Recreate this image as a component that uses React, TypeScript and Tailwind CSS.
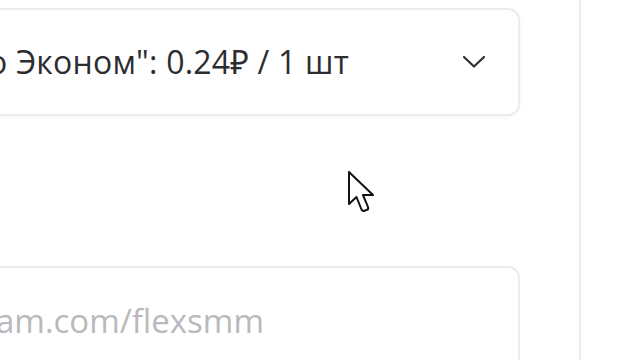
import React from 'react';

function Chevron() {
  return (
    <svg width="24" height="14" viewBox="0 0 24 14" fill="none">
      <polyline points="2,2 12,11.5 22,2" stroke="#2f2f33" strokeWidth="2.2" strokeLinecap="round" strokeLinejoin="round" />
    </svg>
  );
}

function Cursor() {
  return (
    <svg width="30" height="44" viewBox="0 0 30 44" className="absolute left-[347px] top-[170px]">
      <path
        d="M2 2 L2 34 L9.5 27 L14.5 39.5 Q15.5 41.5 17.5 40.8 L20 39.8 Q21.8 39 21 37 L16 25 L26 25 Z"
        fill="#ffffff"
        stroke="#111111"
        strokeWidth="2"
        strokeLinejoin="round"
      />
    </svg>
  );
}

export default function App() {
  return (
    <div
      className="relative w-[640px] h-[360px] overflow-hidden bg-white flex"
      style={{ fontFamily: '"Open Sans", "Noto Sans", sans-serif' }}>
      <div className="w-[581px] h-full border-r-2 border-[#ececee] flex flex-col">
        <div className="mt-[8px] -ml-[40px] w-[560px] h-[108px] shrink-0 rounded-[12px] border-2 border-[#ececef] shadow-[0_1px_4px_rgba(0,0,0,0.04)] flex items-center justify-between pr-[32px] overflow-hidden">
          <span className="whitespace-nowrap text-[32px] text-[#2d2d30] tracking-[0.2px] pl-[26px] leading-none">
            о Эконом": 0.24₽ / 1 шт
          </span>
          <Chevron />
        </div>
        <div className="mt-[150px] -ml-[40px] w-[560px] h-[140px] shrink-0 rounded-[12px] border-2 border-[#ececef] flex items-start pt-[36px] overflow-hidden">
          <span className="whitespace-nowrap text-[33px] text-[#b9b9bd] pl-[34px] leading-none">
            am.com/flexsmm
          </span>
        </div>
      </div>
      <div className="flex-1" />
      <Cursor />
    </div>
  );
}
